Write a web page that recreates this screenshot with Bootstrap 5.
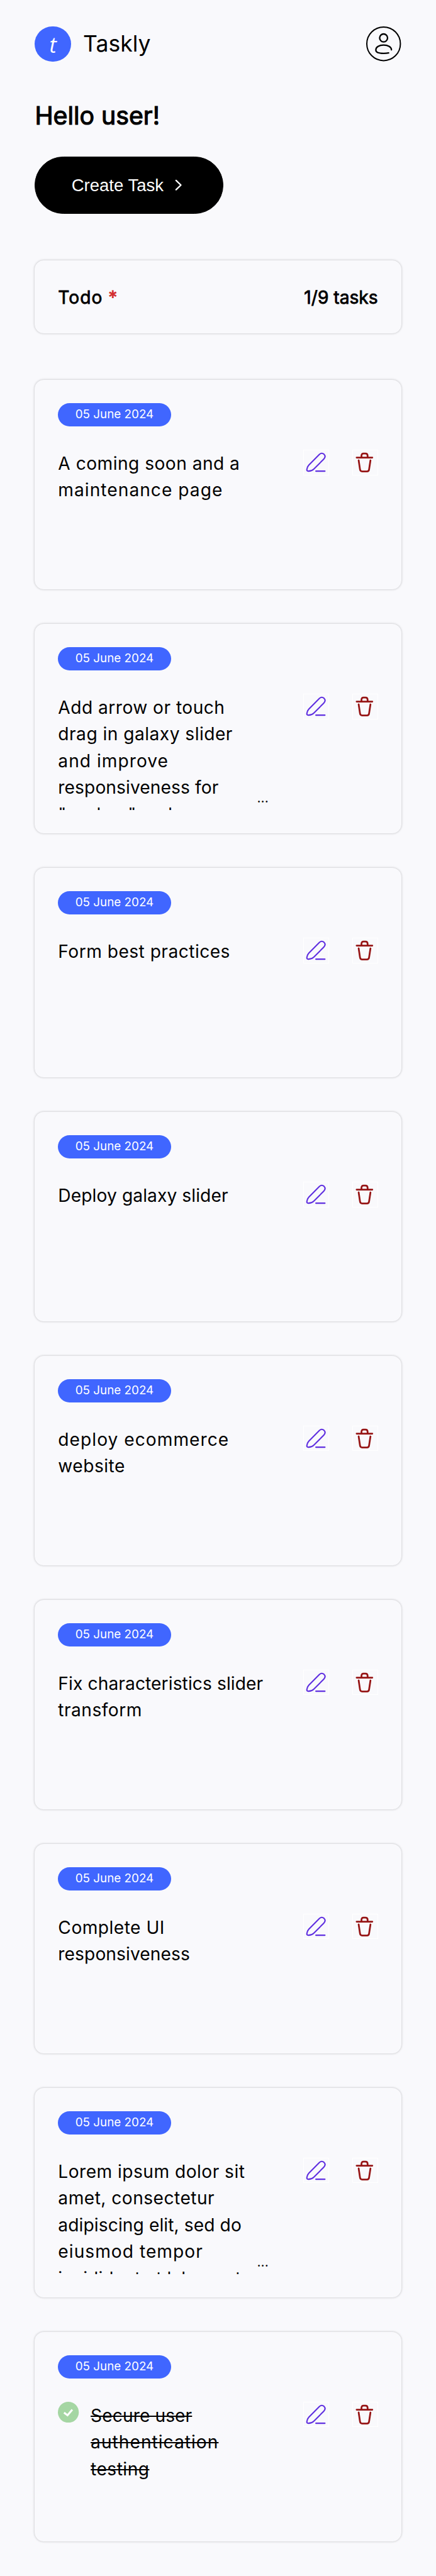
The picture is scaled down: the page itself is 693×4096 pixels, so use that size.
<!DOCTYPE html>
<html lang="en">
<head>
<meta charset="utf-8">
<meta name="viewport" content="width=device-width, initial-scale=1">
<title>Taskly</title>
<link href="https://cdn.jsdelivr.net/npm/bootstrap@5.3.0/dist/css/bootstrap.min.css" rel="stylesheet">
<style>
/* 1rem is the layout's base unit */
html{font-size:9.238px}
body{background:#f9f9fc;color:#000;font-family:Inter,"Open Sans",sans-serif;font-size:3.05rem;line-height:4.6rem}
.page{padding:4.6rem 6rem 6rem}
.brand-mark{width:6.2rem;height:6rem;background:#4066ff;color:#fff;font:italic 400 3.7rem/6rem "Open Sans",sans-serif;padding-top:.1rem}
.brand-name{font-size:3.85rem;line-height:6rem;margin-left:2.1rem}
.avatar{width:6rem;height:6rem}
.hello{font-size:4.25rem;line-height:6.3rem;margin:6.2rem 0 3.9rem;font-weight:400;-webkit-text-stroke:.13rem #000}
.btn-create{--bs-btn-color:#fff;--bs-btn-bg:#000;--bs-btn-border-color:#000;--bs-btn-hover-bg:#222;--bs-btn-hover-color:#fff;width:32.4rem;height:9.8rem;padding:0 0 0 6.2rem;font:400 2.98rem/1 "Liberation Sans",Arial,sans-serif}
.btn-create svg{width:1.3rem;height:2rem;margin-left:1.9rem}
.panel{border-radius:1.6rem;background:#f9f9fc;box-shadow:0 0 .4rem rgba(0,0,0,.26)}
.summary{height:12.6rem;margin-top:8rem;margin-bottom:8rem;padding:.2rem 4rem 0;-webkit-text-stroke:.09rem}
.star{color:#d32f2f}
.task{height:36rem;padding:4rem}
.task-list{gap:6rem}
.date-pill{width:19.4rem;height:4rem;background:#4066ff;font-size:2.04rem;line-height:3.9rem;border-radius:2rem}
.task-row{margin-top:4rem}
.task-text{width:36.2rem;height:20rem;padding-top:.1rem;overflow:hidden;white-space:nowrap}
.more{right:0;bottom:.9rem;line-height:1;font-size:2.3rem}
.actions{gap:4rem}
.icon-btn{width:4.4rem;height:4.4rem;border:.2rem solid #fff;padding:0;background:none}
.icon-btn svg{width:4.4rem;height:4.4rem;margin:-.2rem;display:block}
.check{width:3.6rem;height:3.6rem;margin-right:2rem}
.trk-s{letter-spacing:.01rem}
.trk-m{letter-spacing:.05rem}
.trk-l{letter-spacing:.11rem}
</style>
</head>
<body>
<svg class="d-none">
  <symbol id="pencil" viewBox="0 0 44 44"><g fill="none" stroke="#6030e0" stroke-width="2.3" stroke-linecap="round" stroke-linejoin="round"><path d="M27.8 8.2C30.5 5.7 33.6 5.9 35.8 8C38 10.3 37.9 13.6 35.3 16.3L18 33.5C15.5 36 12 37 8.7 36.9C6.6 36.8 6 36 6.3 33.8C6.7 31 7.6 28.6 9.6 26.5Z"/><path d="M21.8 37H37.2"/></g></symbol>
  <symbol id="trash" viewBox="0 0 44 44"><g fill="none" stroke="#961515" stroke-width="3" stroke-linecap="round" stroke-linejoin="round"><path d="M8.5 13.6H35.5M16.8 13V10.7C16.8 8 18.3 6.6 20.3 6.6H23.7C25.9 6.6 27.4 8 27.4 10.7V13M12 18.4L14.3 34C14.7 36.4 15.6 37.4 18 37.4H26.2C28.6 37.4 29.5 36.4 29.9 34L32.3 18.4"/></g></symbol>
</svg>
<div class="page">
  <header class="d-flex align-items-center justify-content-between">
    <div class="d-flex align-items-center">
      <span class="brand-mark rounded-pill text-center">t</span>
      <span class="brand-name">Taskly</span>
    </div>
    <svg class="avatar" viewBox="0 0 60 60" fill="none" stroke="#000" stroke-width="2.5" stroke-linecap="round"><circle cx="30" cy="30" r="28.9" stroke-width="2.2"/><circle cx="30" cy="19.8" r="6.8"/><path d="M43.5 40.3C43.5 35.5 37.5 32 30 32C22.5 32 16.7 35.5 16.7 40V41C16.7 45 21.5 46.5 30 46.5C33.5 46.5 36.5 46.2 38.6 45.7"/></svg>
  </header>
  <h1 class="hello">Hello user!</h1>
  <button type="button" class="btn btn-create rounded-pill d-flex align-items-center">Create Task<svg viewBox="0 0 13 20" fill="none" stroke="#fff" stroke-width="2.5" stroke-linecap="round" stroke-linejoin="round"><path d="M2 2L10.3 10L2 18"/></svg></button>

  <section class="panel summary d-flex align-items-center justify-content-between">
    <div class="trk-l">Todo <span class="star">*</span></div>
    <div>1/9 tasks</div>
  </section>

  <main class="task-list d-flex flex-column">
    <article class="panel task">
      <div class="date-pill text-white text-center">05 June 2024</div>
      <div class="task-row d-flex justify-content-between align-items-start">
        <div class="task-text"><span class="trk-m">A coming soon and a</span><br><span class="trk-l">maintenance page</span></div>
        <div class="actions d-flex"><button class="icon-btn" aria-label="Edit"><svg><use href="#pencil"/></svg></button><button class="icon-btn" aria-label="Delete"><svg><use href="#trash"/></svg></button></div>
      </div>
    </article>
    <article class="panel task">
      <div class="date-pill text-white text-center">05 June 2024</div>
      <div class="task-row d-flex justify-content-between align-items-start">
        <div class="task-text position-relative"><span class="trk-m">Add arrow or touch</span><br><span class="trk-m">drag in galaxy slider</span><br><span class="trk-l">and improve</span><br><span class="trk-s">responsiveness for</span><br><span>"explore" and</span><span class="more position-absolute">...</span></div>
        <div class="actions d-flex"><button class="icon-btn" aria-label="Edit"><svg><use href="#pencil"/></svg></button><button class="icon-btn" aria-label="Delete"><svg><use href="#trash"/></svg></button></div>
      </div>
    </article>
    <article class="panel task">
      <div class="date-pill text-white text-center">05 June 2024</div>
      <div class="task-row d-flex justify-content-between align-items-start">
        <div class="task-text"><span class="trk-m">Form best practices</span></div>
        <div class="actions d-flex"><button class="icon-btn" aria-label="Edit"><svg><use href="#pencil"/></svg></button><button class="icon-btn" aria-label="Delete"><svg><use href="#trash"/></svg></button></div>
      </div>
    </article>
    <article class="panel task">
      <div class="date-pill text-white text-center">05 June 2024</div>
      <div class="task-row d-flex justify-content-between align-items-start">
        <div class="task-text"><span class="trk-s">Deploy galaxy slider</span></div>
        <div class="actions d-flex"><button class="icon-btn" aria-label="Edit"><svg><use href="#pencil"/></svg></button><button class="icon-btn" aria-label="Delete"><svg><use href="#trash"/></svg></button></div>
      </div>
    </article>
    <article class="panel task">
      <div class="date-pill text-white text-center">05 June 2024</div>
      <div class="task-row d-flex justify-content-between align-items-start">
        <div class="task-text"><span class="trk-l">deploy ecommerce</span><br><span class="trk-m">website</span></div>
        <div class="actions d-flex"><button class="icon-btn" aria-label="Edit"><svg><use href="#pencil"/></svg></button><button class="icon-btn" aria-label="Delete"><svg><use href="#trash"/></svg></button></div>
      </div>
    </article>
    <article class="panel task">
      <div class="date-pill text-white text-center">05 June 2024</div>
      <div class="task-row d-flex justify-content-between align-items-start">
        <div class="task-text"><span class="trk-s">Fix characteristics slider</span><br><span class="trk-m">transform</span></div>
        <div class="actions d-flex"><button class="icon-btn" aria-label="Edit"><svg><use href="#pencil"/></svg></button><button class="icon-btn" aria-label="Delete"><svg><use href="#trash"/></svg></button></div>
      </div>
    </article>
    <article class="panel task">
      <div class="date-pill text-white text-center">05 June 2024</div>
      <div class="task-row d-flex justify-content-between align-items-start">
        <div class="task-text"><span class="trk-m">Complete UI</span><br><span class="trk-s">responsiveness</span></div>
        <div class="actions d-flex"><button class="icon-btn" aria-label="Edit"><svg><use href="#pencil"/></svg></button><button class="icon-btn" aria-label="Delete"><svg><use href="#trash"/></svg></button></div>
      </div>
    </article>
    <article class="panel task">
      <div class="date-pill text-white text-center">05 June 2024</div>
      <div class="task-row d-flex justify-content-between align-items-start">
        <div class="task-text position-relative"><span class="trk-m">Lorem ipsum dolor sit</span><br><span class="trk-m">amet, consectetur</span><br><span class="trk-s">adipiscing elit, sed do</span><br><span class="trk-l">eiusmod tempor</span><br><span class="trk-s">incididunt ut labore et</span><span class="more position-absolute">...</span></div>
        <div class="actions d-flex"><button class="icon-btn" aria-label="Edit"><svg><use href="#pencil"/></svg></button><button class="icon-btn" aria-label="Delete"><svg><use href="#trash"/></svg></button></div>
      </div>
    </article>
    <article class="panel task">
      <div class="date-pill text-white text-center">05 June 2024</div>
      <div class="task-row d-flex align-items-start">
        <svg class="check flex-shrink-0" viewBox="0 0 36 36"><circle cx="18" cy="18" r="18" fill="#a5d6a3"/><path d="M10.6 18.6L16.6 23.2L24.8 13.6" fill="none" stroke="#fff" stroke-width="3.4"/></svg>
        <div class="task-text text-decoration-line-through"><span class="trk-s">Secure user</span><br><span class="trk-l">authentication</span><br><span class="trk-m">testing</span></div>
        <div class="actions d-flex ms-auto"><button class="icon-btn" aria-label="Edit"><svg><use href="#pencil"/></svg></button><button class="icon-btn" aria-label="Delete"><svg><use href="#trash"/></svg></button></div>
      </div>
    </article>
  </main>
</div>
<script src="https://cdn.jsdelivr.net/npm/bootstrap@5.3.0/dist/js/bootstrap.bundle.min.js"></script>
</body>
</html>
